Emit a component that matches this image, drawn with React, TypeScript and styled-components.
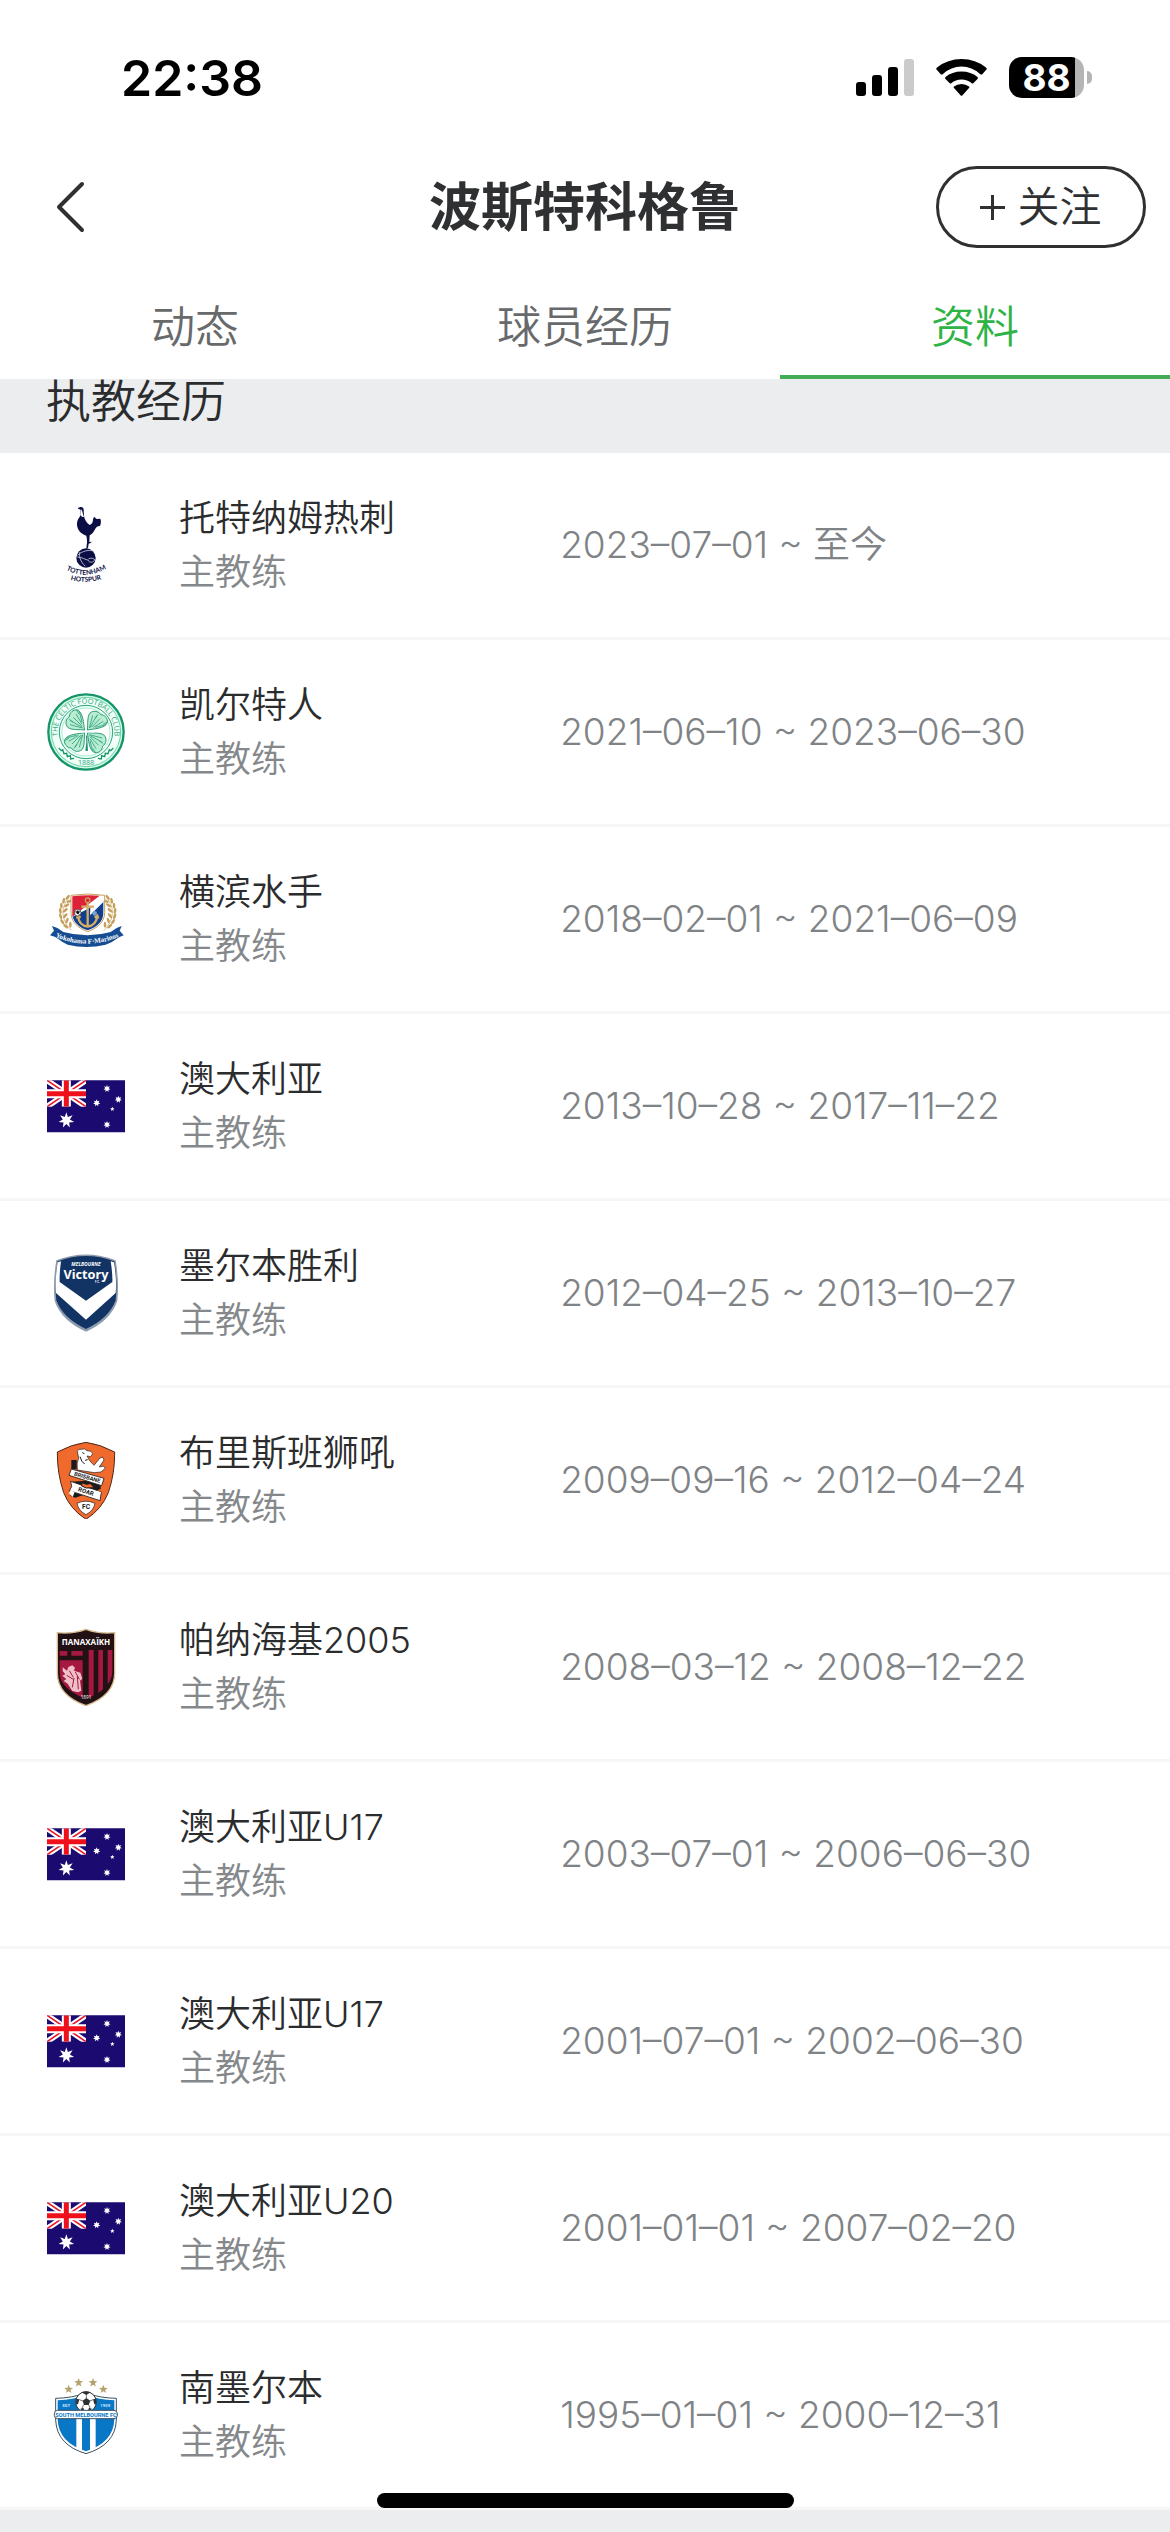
import React from "react";
import styled, { createGlobalStyle } from "styled-components";

const GlobalStyle = createGlobalStyle`
  * { box-sizing: border-box; }
  body {
    margin: 0;
    background: #ecedef;
    font-family: Inter, "Noto Sans CJK SC", sans-serif;
    color: #2b2c2e;
  }
`;

const Page = styled.div`
  min-height: 100vh;
  background: #ecedef;
`;

const Top = styled.header`
  background: #fff;
`;

const StatusBar = styled.div`
  display: flex;
  justify-content: space-between;
  align-items: center;
  height: 141px;
  padding: 14px 78px 0 121px;
  color: #000;
`;

const Clock = styled.time`
  font-size: 50px;
  line-height: 60px;
  font-weight: 600;
`;

const StatusIcons = styled.div`
  display: flex;
  align-items: center;
  gap: 22px;
`;

const Battery = styled.div`
  display: flex;
  align-items: center;
  gap: 3px;
`;

const BatteryCase = styled.div<{ $level: number }>`
  display: flex;
  align-items: center;
  justify-content: center;
  width: 75px;
  height: 41px;
  border-radius: 13px;
  background: linear-gradient(to right, #000 ${(p) => p.$level}%, #b5b5b5 ${(p) => p.$level}%);
  color: #fff;
  font-size: 37px;
  line-height: 41px;
  font-weight: 700;
`;

const BatteryTip = styled.div`
  width: 5px;
  height: 13px;
  border-radius: 0 6px 6px 0;
  background: #b5b5b5;
`;

const NavBar = styled.div`
  display: grid;
  grid-template-columns: 1fr auto 1fr;
  align-items: center;
  height: 132px;
  padding: 0 24px 0 44px;
`;

const BackButton = styled.button`
  justify-self: start;
  display: flex;
  padding: 10px;
  border: 0;
  background: none;
  color: #2f3032;
`;

const Title = styled.h1`
  margin: 0 20px 0 0;
  padding-top: 2px;
  font-size: 52px;
  line-height: 60px;
  font-weight: 700;
  color: #2f3032;
`;

const FollowButton = styled.button`
  justify-self: end;
  display: flex;
  align-items: center;
  justify-content: center;
  gap: 12px;
  width: 210px;
  height: 82px;
  padding: 0;
  border: 3px solid #2f3032;
  border-radius: 41px;
  background: #fff;
  color: #2f3032;
  font-family: inherit;
  font-size: 42px;
  line-height: 60px;
  font-weight: 350;
`;

const Tabs = styled.nav`
  display: grid;
  grid-template-columns: repeat(3, 1fr);
`;

const Tab = styled.button<{ $active?: boolean }>`
  height: 106px;
  padding: 6px 0 0;
  border: 0;
  border-bottom: 4px solid ${(p) => (p.$active ? "#44ab57" : "transparent")};
  background: none;
  color: ${(p) => (p.$active ? "#2eb347" : "#67696b")};
  font-family: inherit;
  font-size: 44px;
  line-height: 60px;
  font-weight: 350;
`;

const SectionTitle = styled.h2`
  margin: 0;
  padding: 0 46px 29px;
  background: #ecedef;
  font-size: 45px;
  line-height: 45px;
  font-weight: 350;
`;

const List = styled.ul`
  margin: 0;
  padding: 0;
  list-style: none;
  background: #fff;
`;

const Row = styled.li`
  display: grid;
  grid-template-columns: 132px minmax(0, 5fr) minmax(0, 8fr);
  align-items: center;
  height: 187px;
  padding-left: 47px;
  border-bottom: 3px solid #f6f6f7;
`;

const Emblem = styled.svg`
  display: block;
  width: 78px;
  height: 78px;
`;

const Name = styled.div`
  font-size: 36px;
  line-height: 54px;
  font-weight: 350;
  white-space: nowrap;
`;

const Role = styled(Name)`
  color: #85888b;
`;

const Period = styled(Role)`
  font-size: 37px;
  color: #808386;
`;

const HomeIndicator = styled.div`
  position: fixed;
  bottom: 24px;
  left: 50%;
  width: 417px;
  height: 15px;
  margin-left: -208px;
  border-radius: 8px;
  background: #000;
`;

const starPath = (cx: number, cy: number, r: number, points: number, inner: number) => {
  const out: string[] = [];
  for (let i = 0; i < points * 2; i++) {
    const a = (Math.PI * i) / points - Math.PI / 2;
    const d = i % 2 ? r * inner : r;
    out.push(`${(cx + d * Math.cos(a)).toFixed(1)},${(cy + d * Math.sin(a)).toFixed(1)}`);
  }
  return out.join(" ");
};

const Tottenham = () => (
  <Emblem viewBox="51 78 234 234" role="img" aria-label="Tottenham Hotspur">
    <path
      fill="#0b0e45"
      d="M144 84l7-3c6-1 10 2 10 8l1 18c1 12 8 21 17 28 8-3 10-9 10-17l3-8 8 7 11-1c3 7 2 15-1 22-6-1-10 2-14 8-4 9-10 16-17 20l-1 20 8-1-6 5-4 1-2 13-5 3 1-12c2-10 1-20-1-28-15-5-27-17-28-33-1-12 6-20 11-28v-17l-8-3z"
    />
    <path d="M154 87c4 8 5 18 8 24-6 0-9-3-10-7z" fill="#fff" />
    <circle cx="168" cy="234" r="29" fill="#0b0e45" />
    <path d="M142 226c16-14 36-18 50-12M142 231c14 0 22 8 35 10M150 216c-5 12 2 30 16 43M176 236c9-3 17-1 18 4-4 8-15 9-19 2" fill="none" stroke="#c9cade" strokeWidth="2.5" />
    <path id="thfc-a" d="M106 268Q168 302 231 264" fill="none" />
    <path id="thfc-b" d="M116 298Q168 314 220 296" fill="none" />
    <g fill="#0b0e45" fontFamily="Lato" fontWeight="700" textAnchor="middle">
      <text fontSize="20"><textPath href="#thfc-a" startOffset="50%">TOTTENHAM</textPath></text>
      <text fontSize="20"><textPath href="#thfc-b" startOffset="50%">HOTSPUR</textPath></text>
    </g>
  </Emblem>
);

const Celtic = () => (
  <Emblem viewBox="51 69 234 234" role="img" aria-label="Celtic">
    <circle cx="168" cy="186" r="113" fill="#d3fbe6" stroke="#17946a" strokeWidth="7" />
    <circle cx="168" cy="186" r="104" fill="#f1fff8" stroke="#64d6a5" strokeWidth="3" />
    <circle cx="168" cy="186" r="80" fill="#e9fdf3" stroke="#2aa67c" strokeWidth="3" />
    <circle cx="168" cy="186" r="72" fill="#fff" stroke="#8ce3bd" strokeWidth="2" />
    {[0, 90, 180, 270].map((a) => (
      <g key={a} transform={`rotate(${a} 168 184)`} stroke="#2a9c75" strokeWidth="3" fill="none">
        <path d="M172 180c2-16-1-40 8-51 11-9 26-5 32 5 13 1 22 11 20 24-7 18-41 18-60 22z" fill="#b9edd3" />
        <path d="M178 174l10-38M180 173l20-36M184 172l26-26M190 172l30-18M196 172l32-8M204 133l-8 12M232 156l-13 7" strokeWidth="2.4" />
      </g>
    ))}
    <path d="M168 186q5 22 1 50M140 186h56M168 160v50" stroke="#fff" strokeWidth="3" fill="none" />
    <path d="M168 196q3 20-2 46l8 1q-2-25-2-46z" fill="#17946a" />
    <path id="celtic-arc" d="M86 208A85 85 0 1 1 250 208" fill="none" />
    <g fill="#2aa67c" fontFamily="Open Sans" textAnchor="middle">
      <text fontSize="22"><textPath href="#celtic-arc" startOffset="50%">THE CELTIC FOOTBALL CLUB</textPath></text>
      <text x="168" y="286" fontSize="21">1888</text>
    </g>
    <path d="M86 234l8 8 4-3 4 12 8-1 2 10 9-3 1 10 10-2M250 234l-8 8-4-3-4 12-8-1-2 10-9-3-1 10-10-2" fill="none" stroke="#17946a" strokeWidth="4" />
  </Emblem>
);

const laurel = [
  [113, 112, 40], [101, 122, 10], [94, 137, 0], [91, 153, -10], [92, 169, -20], [97, 185, -35], [107, 199, -50],
  [118, 124, 70], [110, 136, 60], [106, 151, 50], [106, 167, 40], [111, 182, 20], [121, 194, 0],
];

const Marinos = () => (
  <Emblem viewBox="51 60 234 234" role="img" aria-label="Yokohama F. Marinos">
    {[false, true].map((flip) => (
      <g key={String(flip)} fill="#c69f5d" transform={flip ? "translate(346 0) scale(-1 1)" : undefined}>
        <path d="M116 113c-24 30-24 65 8 98" fill="none" stroke="#c69f5d" strokeWidth="2" />
        {laurel.map(([x, y, r]) => (
          <ellipse key={`${x}-${y}`} cx={x} cy={y} rx="4" ry="9" transform={`rotate(${r} ${x} ${y})`} />
        ))}
      </g>
    ))}
    <path d="M123 106q50-8 101 0v52c0 28-23 47-51 57-28-10-50-29-50-57z" fill="#fff" stroke="#c69f5d" strokeWidth="3" />
    <path d="M127 109q44-6 82-2L127 170z" fill="#dc2138" />
    <path d="M220 122v37c0 26-20 42-47 52-25-9-40-22-45-41z" fill="#123f8c" />
    <path d="M182 128l38-17v15l-40 40z" fill="#fff" />
    <circle cx="173" cy="121" r="7" fill="none" stroke="#c69f5d" strokeWidth="4" />
    <path d="M173 129v68M154 140h38M144 170q4 27 29 30 24-4 29-30M141 176l3-9 8 6M205 176l-3-9-8 6" fill="none" stroke="#d4ad67" strokeWidth="7" />
    <circle cx="143" cy="158" r="10" fill="#fff" stroke="#222" strokeWidth="2" />
    <path d="M139 155l4-3 5 3-2 6h-5zM134 156h5M148 155l4-2M146 161l3 5" stroke="#222" strokeWidth="2" />
    <circle cx="194" cy="160" r="7" fill="#76a0cd" />
    <path d="M66 198q18 4 34 18 73 20 142 0 17-14 33-18l-6 14 12 14q-13 4-23 12-11 10-31 16-58 14-114 0-15-6-28-17-9-7-25-11l12-14z" fill="#164d92" />
    <path id="marinos-arc" d="M74 230Q171 272 268 230" fill="none" />
    <text fill="#fff" fontFamily="Liberation Serif" fontWeight="700" fontSize="21" textAnchor="middle">
      <textPath href="#marinos-arc" startOffset="50%">Yokohama F·Marinos</textPath>
    </text>
  </Emblem>
);

const AustraliaFlag = () => (
  <Emblem viewBox="51 23 234 234" role="img" aria-label="Australia">
    <path fill="#1b0b70" d="M51 63h234v156H51z" />
    <svg x="51" y="63" width="117" height="79" viewBox="0 0 117 79">
      <path d="M0 0l117 79M117 0L0 79" stroke="#fff" strokeWidth="17" />
      <path d="M0 0l117 79M117 0L0 79" stroke="#e8192c" strokeWidth="5" />
      <path d="M58 0v79M0 40h117" stroke="#fff" strokeWidth="27" />
      <path d="M58 0v79M0 40h117" stroke="#f0101c" strokeWidth="15" />
    </svg>
    <g fill="#fff">
      <polygon points={starPath(109, 183, 24, 7, 0.45)} />
      <polygon points={starPath(231, 88, 11, 7, 0.5)} />
      <polygon points={starPath(265, 120, 11, 7, 0.5)} />
      <polygon points={starPath(200, 131, 11, 7, 0.5)} />
      <polygon points={starPath(231, 196, 11, 7, 0.5)} />
      <polygon points={starPath(247, 149, 7, 5, 0.45)} />
    </g>
  </Emblem>
);

const Victory = () => (
  <Emblem viewBox="51 72 234 234" role="img" aria-label="Melbourne Victory">
    <path d="M79 91Q168 56 257 91q11 65 5 122-21 60-94 92-73-32-94-92-6-57 5-122z" fill="#8e9bac" />
    <path d="M83 94Q168 62 253 94q10 62 4 117-20 54-89 86-69-32-89-86-6-55 4-117z" fill="#123465" />
    <path d="M83 97l10-3q-5 38-4 62l79 56 79-56q1-24-5-62l10 3q9 54 5 92l-89 80-90-80q-4-38 5-92z" fill="#fff" />
    <g fill="#fff" textAnchor="middle">
      <text x="168" y="108" fontFamily="Open Sans" fontWeight="700" fontSize="15" fontStyle="italic">MELBOURNE</text>
      <text x="168" y="147" fontFamily="Noto Sans" fontWeight="700" fontSize="38">Victory</text>
      <text x="202" y="160" fontFamily="Open Sans" fontWeight="700" fontSize="8">F.C.</text>
    </g>
  </Emblem>
);

const Brisbane = () => (
  <Emblem viewBox="51 63 234 234" role="img" aria-label="Brisbane Roar">
    <path d="M168 67q43 6 86 29 1 63-19 122-20 50-67 80-47-30-67-80-20-59-19-122 43-23 86-29z" fill="#ef6a2c" stroke="#4d2a1b" strokeWidth="3" />
    <path d="M124 120h16v28h-16zM124 185l88-6v28l-76 26-16-6 14-12z" fill="#1b1a1c" />
    <path d="M142 94q4-9 11-6 11-5 18 4 14-1 17 9l-6 9-11-2 8 14 13 14 18-22 8-3 4 9-14 21 12-3 6 7-13 11-20 2-51-8q-3-22 4-35z" fill="#fff" stroke="#1b1a1c" strokeWidth="2" />
    <path d="M157 98l6 3M150 110q4 16 14 22M173 119l-8 2" stroke="#1b1a1c" strokeWidth="3" fill="none" />
    <path d="M124 147l98 28-7 22-98-31zM122 184l92 32-4 26-92-30 7-12z" fill="#fff" stroke="#1b1a1c" strokeWidth="2.5" />
    <path d="M156 188l13 5 12-2 12 12-24 1-14-6z" fill="#ef6a2c" stroke="#1b1a1c" strokeWidth="3" />
    <path d="M122 211l12 5-6 15-11-11zM201 212l12 5-5 12-13-8z" fill="#fff" />
    <path d="M141 250q27-13 54 0-4 22-27 34-23-12-27-34z" fill="#fff" stroke="#1b1a1c" strokeWidth="2" />
    <g fill="#1b1a1c" fontFamily="Roboto" fontWeight="700" textAnchor="middle">
      <text x="172" y="178" fontSize="17" transform="rotate(16 172 172)">BRISBANE</text>
      <text x="168" y="221" fontSize="18" transform="rotate(18 168 215)">ROAR</text>
      <text x="168" y="267" fontSize="20">FC</text>
    </g>
  </Emblem>
);

const Panachaiki = () => (
  <Emblem viewBox="51 54 234 234" role="img" aria-label="Panachaiki">
    <path d="M168 58q41 15 86 10v121q0 67-86 98-86-31-86-98V68q45 5 86-10z" fill="#211014" stroke="#d8ba8e" strokeWidth="4" />
    <path d="M89 123h23v14H89zM124 123h34v14h-34zM89 151h69v112q-69-30-69-76zM176 120h15v136l-15 9zM205 120h14v118l-14 11zM233 120h14v68q-3 22-14 34z" fill="#a5183f" />
    <path d="M98 172l13 10 4-11 12-5 8 7-3 9 19 6 6 18-7 6 4 30-10 5-17-4-14-22-12-8 8-6-12-10 9-4-8-10z" fill="#f0bfc8" />
    <path d="M118 182l12 20M110 196l20 12M132 204l-5 28M142 198l3 40M136 186l12 22" stroke="#a5183f" strokeWidth="3" />
    <g fill="#fff" textAnchor="middle" fontFamily="Open Sans">
      <text x="168" y="106" fontWeight="700" fontSize="24">ΠΑΝΑΧΑΪΚΗ</text>
      <text x="168" y="267" fontSize="14">1891</text>
    </g>
  </Emblem>
);

const SouthMelbourne = () => (
  <Emblem viewBox="51 48 234 234" role="img" aria-label="South Melbourne">
    <g fill="#b5a36e">
      <polygon points={starPath(116, 88, 14, 5, 0.42)} />
      <polygon points={starPath(146, 68, 14, 5, 0.42)} />
      <polygon points={starPath(189, 68, 14, 5, 0.42)} />
      <polygon points={starPath(220, 88, 14, 5, 0.42)} />
    </g>
    <path d="M77 115q50-1 91-16 41 15 91 16v65q-3 75-91 101-88-26-91-101z" fill="#fff" stroke="#3b5063" strokeWidth="3" />
    <path d="M83 121q46-1 85-16 39 15 85 16v57q-2 69-85 96-83-27-85-96z" fill="#0877c6" />
    <path d="M139 174h17v98l-17-6zM180 174h17v92l-17 6z" fill="#fff" />
    <circle cx="168" cy="126" r="31" fill="#fff" stroke="#2d3033" strokeWidth="3" />
    <path d="M158 122l11-8 12 8-5 13h-14zM154 97q15-5 28 0l-13 8zM139 116l9 2-4 15-6-2zM198 116l-9 2 4 15 6-2zM150 147l10-4 4 12zM187 147l-10-4-4 12z" fill="#2d3033" />
    <path d="M169 104v11M148 119l11 4M189 119l-9 4M161 134l-5 10M176 134l4 10" stroke="#2d3033" strokeWidth="2" />
    <rect x="73" y="151" width="189" height="25" rx="10" fill="#fff" stroke="#3b5063" strokeWidth="3" />
    <g textAnchor="middle" fontFamily="Roboto" fontWeight="700">
      <text x="168" y="170" fontSize="17" fill="#0877c6">SOUTH MELBOURNE FC</text>
      <text x="109" y="140" fontSize="13" fill="#cfe7fa">EST</text>
      <text x="226" y="140" fontSize="13" fill="#cfe7fa">1959</text>
    </g>
  </Emblem>
);

const career = [
  { name: "托特纳姆热刺", period: "2023–07–01 ~ 至今", Badge: Tottenham },
  { name: "凯尔特人", period: "2021–06–10 ~ 2023–06–30", Badge: Celtic },
  { name: "横滨水手", period: "2018–02–01 ~ 2021–06–09", Badge: Marinos },
  { name: "澳大利亚", period: "2013–10–28 ~ 2017–11–22", Badge: AustraliaFlag },
  { name: "墨尔本胜利", period: "2012–04–25 ~ 2013–10–27", Badge: Victory },
  { name: "布里斯班狮吼", period: "2009–09–16 ~ 2012–04–24", Badge: Brisbane },
  { name: "帕纳海基2005", period: "2008–03–12 ~ 2008–12–22", Badge: Panachaiki },
  { name: "澳大利亚U17", period: "2003–07–01 ~ 2006–06–30", Badge: AustraliaFlag },
  { name: "澳大利亚U17", period: "2001–07–01 ~ 2002–06–30", Badge: AustraliaFlag },
  { name: "澳大利亚U20", period: "2001–01–01 ~ 2007–02–20", Badge: AustraliaFlag },
  { name: "南墨尔本", period: "1995–01–01 ~ 2000–12–31", Badge: SouthMelbourne },
];

const SignalIcon = () => (
  <svg width="58" height="38" viewBox="0 0 58 38" aria-hidden="true">
    <rect x="0" y="23" width="10" height="14" rx="3" />
    <rect x="16" y="16" width="10" height="21" rx="3" />
    <rect x="32" y="8" width="10" height="29" rx="3" />
    <rect x="48" y="0" width="10" height="37" rx="3" fill="#cbcbcb" />
  </svg>
);

const WifiIcon = () => (
  <svg width="51" height="38" viewBox="0 0 51 38" aria-hidden="true">
    <path d="M1 11Q-.5 10 1 8.500Q11.500 0 25.500 0T50 8.500Q51.500 10 50 11L46.500 15Q45.500 16 44 15Q36 7.500 25.500 7.500T7 15Q5.500 16 4.500 15Z" />
    <path d="M9.500 20Q8.500 19 9.500 18Q16 12.500 25.500 12.500T41.500 18Q42.500 19 41.500 20L37.500 24Q36.500 25 35.500 24Q31.500 20.500 25.500 20.500T15.500 24Q14.500 25 13.500 24Z" />
    <path d="M18 29Q17 28 18 27.500Q21 25 25.500 25T33 27.500Q34 28 33 29L26.500 36.200Q25.500 37.300 24.500 36.200Z" />
  </svg>
);

const PlusIcon = () => (
  <svg width="25" height="25" viewBox="0 0 25 25" stroke="currentColor" strokeWidth="3" aria-hidden="true">
    <path d="M12.500 0v25M0 12.500h25" />
  </svg>
);

export default function App() {
  return (
    <Page>
      <GlobalStyle />
      <Top>
        <StatusBar>
          <Clock>22:38</Clock>
          <StatusIcons>
            <SignalIcon />
            <WifiIcon />
            <Battery>
              <BatteryCase $level={88}>88</BatteryCase>
              <BatteryTip />
            </Battery>
          </StatusIcons>
        </StatusBar>
        <NavBar>
          <BackButton aria-label="返回">
            <svg width="32" height="54" viewBox="0 0 32 54" fill="none" stroke="currentColor" strokeWidth="4" strokeLinecap="round" strokeLinejoin="round">
              <path d="M28 4L5 27l23 23" />
            </svg>
          </BackButton>
          <Title>波斯特科格鲁</Title>
          <FollowButton>
            <PlusIcon />
            关注
          </FollowButton>
        </NavBar>
        <Tabs>
          <Tab>动态</Tab>
          <Tab>球员经历</Tab>
          <Tab $active aria-current="page">资料</Tab>
        </Tabs>
      </Top>
      <main>
        <SectionTitle>执教经历</SectionTitle>
        <List>
          {career.map(({ name, period, Badge }) => (
            <Row key={period}>
              <Badge />
              <div>
                <Name>{name}</Name>
                <Role>主教练</Role>
              </div>
              <Period>{period}</Period>
            </Row>
          ))}
        </List>
      </main>
      <HomeIndicator />
    </Page>
  );
}
